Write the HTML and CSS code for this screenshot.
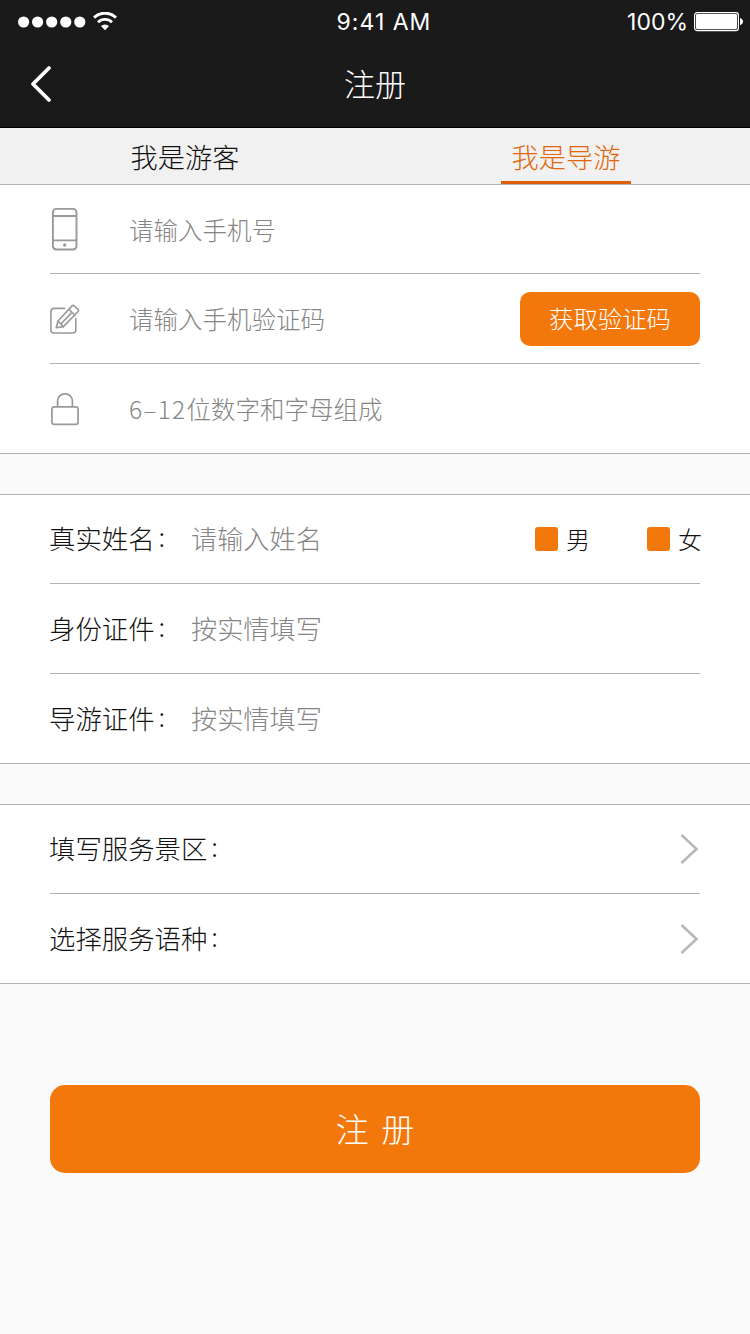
FILE: index.html
```
<!DOCTYPE html>
<html lang="zh-CN">
<head>
  <meta charset="UTF-8">
  <meta name="viewport" content="width=device-width, initial-scale=1.0">
  <title>注册</title>
  <link rel="stylesheet" href="styles.css">
</head>
<body>
  <header class="header">
    <div class="status-bar">
      <div class="status-left">
        <svg width="68" height="12" viewBox="0 0 68 12" fill="#fff">
          <circle cx="5.6" cy="6" r="5.6"/>
          <circle cx="19.6" cy="6" r="5.6"/>
          <circle cx="33.7" cy="6" r="5.6"/>
          <circle cx="47.8" cy="6" r="5.6"/>
          <circle cx="61.8" cy="6" r="5.6"/>
        </svg>
        <svg class="wifi" width="24" height="19" viewBox="0 0 24 19" fill="none" stroke="#fff">
          <path d="M1 5.6a16 16 0 0 1 22 0" stroke-width="3"/>
          <path d="M5 10.2a10.2 10.2 0 0 1 14 0" stroke-width="2.8"/>
          <path d="M8 14a5.8 5.8 0 0 1 8 0l-4 4.2z" fill="#fff" stroke="none"/>
        </svg>
      </div>
      <div class="status-time">9:41 AM</div>
      <div class="status-right">
        <span class="battery-text">100%</span>
        <svg width="50" height="20" viewBox="0 0 50 20">
          <rect x="0.6" y="0.6" width="43.8" height="18" rx="2.6" fill="none" stroke="#fff" stroke-width="1.2"/>
          <rect x="2" y="2" width="41" height="15.2" rx="1.4" fill="#fff"/>
          <path d="M46 6q3 1 3 3.6T46 13.2z" fill="#fff"/>
        </svg>
      </div>
    </div>
    <div class="nav-bar">
      <svg class="back" width="22" height="38" viewBox="0 0 22 38" fill="none" stroke="#fff" stroke-width="3.8" stroke-linecap="round" stroke-linejoin="round">
        <path d="M19 3L3 19l16 16"/>
      </svg>
      <h1>注册</h1>
    </div>
  </header>

  <nav class="tabs">
    <div class="tab"><span>我是游客</span></div>
    <div class="tab active"><span>我是导游</span></div>
  </nav>

  <section class="section account">
    <div class="row">
      <div class="icon">
        <svg width="30" height="44" viewBox="0 0 30 44" fill="none" stroke="#999" stroke-width="1.9">
          <rect x="2.9" y="1.9" width="23.6" height="40.6" rx="3.4"/>
          <path d="M3 9h23.4M3 33.4h23.4"/>
          <circle cx="14.7" cy="38" r="1.7" fill="#999" stroke="none"/>
        </svg>
      </div>
      <span class="placeholder">请输入手机号</span>
    </div>
    <div class="row">
      <div class="icon">
        <svg width="30" height="30" viewBox="0 0 30 30" fill="none" stroke="#999" stroke-width="1.6" stroke-linejoin="round" stroke-linecap="round">
          <path d="M14.6 4.4H4Q.9 4.4.9 7.5V26q0 3 3 3H22.8q3 0 3-3V14.6"/>
          <path d="M6.2 23.8L8 17 22 1.9Q23 .8 24.2 1.9L28 5.4Q29 6.4 28.1 7.5L13.4 22.6z"/>
          <path d="M8 17l5.4 5.6M18.8 5.2l5.8 5.8M11 19.8L22 8.4"/>
        </svg>
      </div>
      <span class="placeholder">请输入手机验证码</span>
      <button class="code-btn">获取验证码</button>
    </div>
    <div class="row">
      <div class="icon">
        <svg width="30" height="34" viewBox="0 0 30 34" fill="none" stroke="#999" stroke-width="1.7">
          <rect x="1.9" y="14.9" width="26.2" height="17.4" rx="2.4"/>
          <path d="M7.6 14.8V9.2a7.4 7.4 0 0 1 14.8 0v5.6"/>
        </svg>
      </div>
      <span class="placeholder"><span class="digits">6–12</span>位数字和字母组成</span>
    </div>
  </section>

  <section class="section">
    <div class="row">
      <span class="label">真实姓名<i class="colon">:</i></span>
      <span class="placeholder">请输入姓名</span>
      <div class="gender">
        <span class="option"><i class="box"></i><span>男</span></span>
        <span class="option"><i class="box"></i><span>女</span></span>
      </div>
    </div>
    <div class="row">
      <span class="label">身份证件<i class="colon">:</i></span>
      <span class="placeholder">按实情填写</span>
    </div>
    <div class="row">
      <span class="label">导游证件<i class="colon">:</i></span>
      <span class="placeholder">按实情填写</span>
    </div>
  </section>

  <section class="section">
    <div class="row">
      <span class="label">填写服务景区<i class="colon">:</i></span>
      <svg class="arrow" width="20" height="32" viewBox="0 0 20 32" fill="none" stroke="#b8b8b8" stroke-width="2.6">
        <path d="M1.5 2l15 14-15 14"/>
      </svg>
    </div>
    <div class="row">
      <span class="label">选择服务语种<i class="colon">:</i></span>
      <svg class="arrow" width="20" height="32" viewBox="0 0 20 32" fill="none" stroke="#b8b8b8" stroke-width="2.6">
        <path d="M1.5 2l15 14-15 14"/>
      </svg>
    </div>
  </section>

  <button class="submit-btn">注 册</button>
</body>
</html>
```
FILE: styles.css
```
* {
  margin: 0;
  padding: 0;
  box-sizing: border-box;
}

body {
  width: 750px;
  height: 1334px;
  overflow: hidden;
  background: #fafafa;
  color: #111;
  font-family: "Noto Sans CJK SC", sans-serif;
  font-weight: 300;
}

svg {
  display: block;
  flex-shrink: 0;
}

button {
  border: none;
  background: #f2780c;
  color: #fff;
  font-family: inherit;
  font-weight: 300;
}

.header {
  height: 128px;
  background: #1a1a1a;
  border-bottom: 1px solid #000;
  color: #fff;
}

.status-bar {
  display: grid;
  grid-template-columns: 1fr auto 1fr;
  align-items: center;
  height: 43px;
  padding: 0 6px 0 18px;
  font-family: Inter, sans-serif;
  font-size: 23px;
  font-weight: 400;
}

.status-left,
.status-right {
  display: flex;
  align-items: center;
}

.status-left {
  gap: 7px;
}

.status-right {
  justify-content: flex-end;
  gap: 6px;
}

.status-time {
  padding-left: 6px;
  letter-spacing: 1px;
}

.nav-bar {
  display: grid;
  grid-template-columns: 1fr auto 1fr;
  align-items: center;
  height: 82px;
  padding: 0 30px;
}

.nav-bar h1 {
  padding-bottom: 4px;
  font-size: 31px;
  font-weight: 300;
}

.tabs {
  display: flex;
  height: 57px;
  background: #f1f1f1;
  border-bottom: 1px solid #b2b2b2;
}

.tab {
  width: 370px;
  display: flex;
  justify-content: center;
  font-size: 27.2px;
  line-height: 56px;
}

.tab.active {
  width: 368px;
  margin-left: 12px;
  color: #e0670c;
}

.tab.active span {
  width: 130px;
  text-align: center;
  border-bottom: 3px solid #dd5f0a;
}

.section {
  margin-bottom: 40px;
  padding: 0 50px;
  background: #fff;
  border-top: 1px solid #b2b2b2;
  border-bottom: 1px solid #b2b2b2;
}

.section.account {
  border-top: none;
}

.row {
  display: flex;
  align-items: center;
  height: 90px;
  border-bottom: 1px solid #b2b2b2;
}

.row:first-child {
  height: 89px;
}

.row:last-child {
  height: 89px;
  border-bottom: none;
}

.icon {
  width: 80px;
}

.label {
  width: 142px;
  margin-left: -1px;
  padding-bottom: 3px;
  font-size: 26.4px;
  white-space: nowrap;
}

.colon {
  padding-left: 4px;
  font-style: normal;
  line-height: 1;
  vertical-align: 2px;
}

.placeholder {
  padding-bottom: 2px;
  color: #858585;
  font-size: 26.2px;
}

.account .placeholder {
  margin-left: -1px;
  padding-bottom: 0;
  font-size: 24.5px;
}

.digits {
  letter-spacing: 1.3px;
}

.code-btn {
  width: 180px;
  height: 54px;
  margin-left: auto;
  padding-bottom: 2px;
  border-radius: 10px;
  font-size: 24.4px;
}

.gender {
  display: flex;
  gap: 57px;
  margin: 0 -2px 0 auto;
}

.option {
  display: flex;
  align-items: center;
  gap: 8px;
  font-size: 24px;
}

.option span {
  padding-bottom: 2px;
}

.box {
  width: 23px;
  height: 24px;
  border-radius: 3px;
  background: #f2780c;
}

.arrow {
  margin-left: auto;
}

.submit-btn {
  display: block;
  width: 650px;
  height: 88px;
  margin: 101px auto 0;
  padding-bottom: 3px;
  border-radius: 15px;
  font-size: 33px;
  word-spacing: 5px;
}
```
